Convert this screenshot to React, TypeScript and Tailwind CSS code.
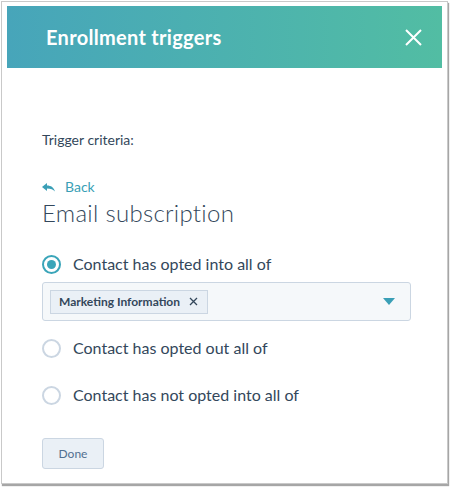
import { useState } from 'react';

const options = [
  'Contact has opted into all of',
  'Contact has opted out all of',
  'Contact has not opted into all of',
];

function Radio({ checked }: { checked: boolean }) {
  return (
    <span
      className={`flex h-[19px] w-[19px] shrink-0 items-center justify-center rounded-full border-2 bg-white ${
        checked ? 'border-[#3aa5b9]' : 'border-[#cbd6e2]'
      }`}
    >
      {checked && <span className="h-[9px] w-[9px] rounded-full bg-[#3aa5b9]" />}
    </span>
  );
}

export default function App() {
  const [selected, setSelected] = useState(0);

  return (
    <div className="h-[487px] w-[450px] bg-white p-px font-['Lato',sans-serif]">
      <div className="flex h-[483px] w-[447px] flex-col border border-[#c9c9c9] bg-white px-[5px] pt-[4px] shadow-[1px_2px_1px_rgba(0,0,0,0.35)]">
        {/* Header */}
        <div className="flex h-[62px] shrink-0 items-center justify-between bg-gradient-to-r from-[#47a5ba] to-[#52bda3] pl-[39px] pr-[16px]">
          <h2 className="text-[20px] font-bold tracking-[0.3px] text-white">Enrollment triggers</h2>
          <button className="p-1 text-white">
            <svg width="17" height="17" viewBox="0 0 17 17" fill="none" stroke="currentColor" strokeWidth="2">
              <path d="M1 1L16 16M16 1L1 16" />
            </svg>
          </button>
        </div>

        {/* Body */}
        <div className="flex flex-col pl-[35px] pr-[31px]">
          <p className="mt-[64px] text-[14px] leading-[16px] text-[#33475b]">Trigger criteria:</p>

          <button className="mt-[31px] flex items-center gap-[10px] text-[14px] leading-[16px] text-[#3a9fb6]">
            <svg width="13" height="9" viewBox="0 0 13 9" fill="currentColor">
              <path d="M0 4L5 0V2.4C9 2.4 12 4.4 13 8.6C11.3 6.2 8.8 5.4 5 5.4V8Z" />
            </svg>
            Back
          </button>
          <h3 className="mt-[4px] text-[24px] font-light leading-[28px] tracking-[0.3px] text-[#33475b]">Email subscription</h3>

          <div className="mt-[26px] flex flex-col">
            {options.map((label, i) => (
              <div key={label}>
                <label
                  onClick={() => setSelected(i)}
                  className={`flex cursor-pointer items-center gap-[12px] ${i === 1 ? 'mt-[16px]' : i === 2 ? 'mt-[25px]' : ''}`}
                >
                  <Radio checked={selected === i} />
                  <span className="text-[16px] leading-[22px] text-[#33475b]">{label}</span>
                </label>
                {i === 0 && (
                  <div className="mt-[7px] flex h-[39px] items-center justify-between rounded-[3px] border border-[#cbd6e2] bg-[#f5f8fa] pl-[7px] pr-[15px]">
                    <span className="flex h-[24px] items-center gap-[9px] border border-[#cbd6e2] bg-[#eaf0f6] pl-[8px] pr-[9px] text-[12px] font-bold text-[#33475b]">
                      Marketing Information
                      <svg width="9" height="9" viewBox="0 0 9 9" stroke="#33475b" strokeWidth="1.3">
                        <path d="M1 1L8 8M8 1L1 8" />
                      </svg>
                    </span>
                    <svg width="12" height="7" viewBox="0 0 12 7" fill="#3a9fb6">
                      <path d="M0 0H12L6 7Z" />
                    </svg>
                  </div>
                )}
              </div>
            ))}
          </div>

          <div className="mt-[32px]">
            <button className="h-[31px] w-[62px] rounded-[3px] border border-[#cbd6e2] bg-[#eaf0f6] text-[12px] text-[#516f90]">
              Done
            </button>
          </div>
        </div>
      </div>
    </div>
  );
}
